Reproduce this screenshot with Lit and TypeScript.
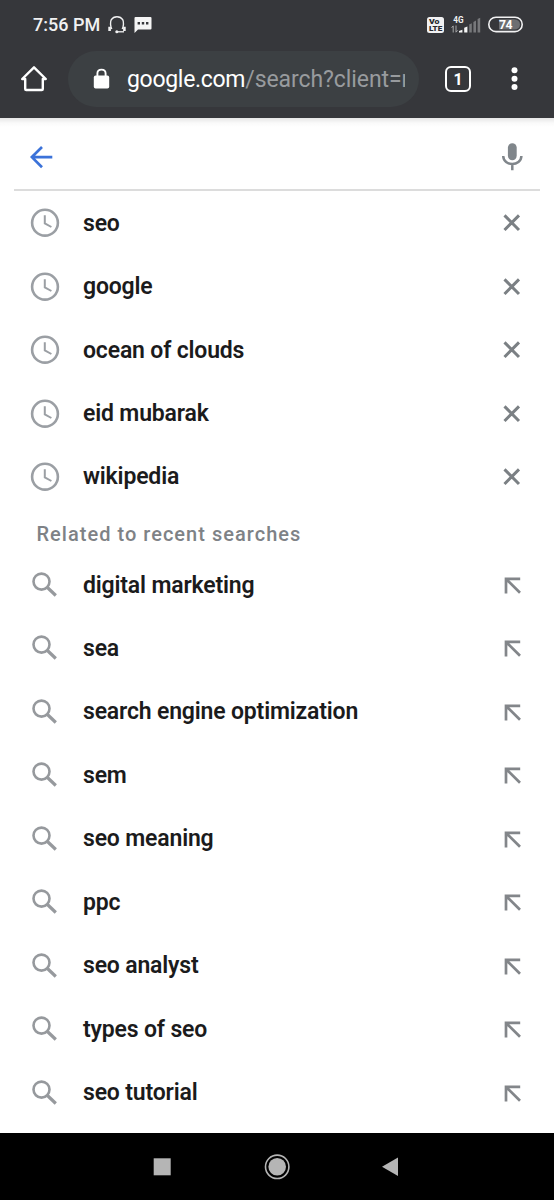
import { LitElement, html, css } from "lit";
import { customElement } from "lit/decorators.js";

const RECENT = ["seo", "google", "ocean of clouds", "eid mubarak", "wikipedia"];
const RELATED = [
  "digital marketing",
  "sea",
  "search engine optimization",
  "sem",
  "seo meaning",
  "ppc",
  "seo analyst",
  "types of seo",
  "seo tutorial",
];

const clock = html`<svg width="30" height="30" viewBox="0 0 30 30" fill="none" stroke="#9b9fa4">
  <circle cx="15" cy="14.7" r="12.9" stroke-width="2.6"></circle>
  <path d="M14.8 7.2V15.3L21.4 19" stroke-width="2"></path>
</svg>`;
const lens = html`<svg width="30" height="30" viewBox="0 0 30 30" fill="none" stroke="#96999d">
  <circle cx="11.5" cy="11.6" r="8" stroke-width="2.6"></circle>
  <path d="M17.4 17.5L25.8 25.5" stroke-width="3.2"></path>
</svg>`;
const cross = html`<svg width="20" height="20" viewBox="0 0 20 20" fill="none" stroke="#7b8084">
  <path d="M2.5 2.4L17 17M17 2.4L2.5 17" stroke-width="3"></path>
</svg>`;
const fill = html`<svg width="20" height="20" viewBox="0 0 20 20" fill="none" stroke="#83868a">
  <path d="M18.2 3.8H4V18.4M4.4 4.2L18 17.8" stroke-width="2.7"></path>
</svg>`;

@customElement("status-bar")
class StatusBar extends LitElement {
  static styles = css`
    :host {
      display: flex;
      align-items: center;
      height: 49px;
      padding: 0 31px 0 33px;
      box-sizing: border-box;
      color: #f1f1f2;
    }
    svg {
      display: block;
    }
    .time {
      font-size: 18px;
      font-weight: 500;
      width: 74px;
      white-space: nowrap;
    }
    .message {
      margin-left: 7px;
      margin-right: auto;
    }
    .signal {
      margin: 0 7px;
    }
    text {
      font-family: Roboto, sans-serif;
    }
  `;
  render() {
    return html`
      <span class="time">7:56 PM</span>
      <svg width="20" height="20" viewBox="0 0 20 20" fill="none" stroke="#f1f1f2">
        <path d="M4.8 14C3.4 11.5 3 7 4.3 4.7C6.7.7 13.3.7 15.7 4.7C17 7 16.6 11.5 15.2 14" stroke-width="1.4"></path>
        <path d="M2.6 11.8V16M17.4 11.8V16" stroke-width="2.6"></path>
        <path d="M9.6 16.8H17" stroke-width="1.3"></path>
        <circle cx="9.8" cy="16.8" r="1.5" fill="#f1f1f2" stroke="none"></circle>
      </svg>
      <svg class="message" width="18" height="18" viewBox="0 0 18 18">
        <path d="M.5 2Q.5 1 1.5 1H16.5Q17.5 1 17.5 2V12.5Q17.5 13.5 16.5 13.5H4L.5 17Z" fill="#f5f5f5"></path>
        <path d="M3.6 6.1H6V8.5H3.6ZM7.8 6.1H10.2V8.5H7.8ZM12 6.1H14.4V8.5H12Z" fill="#37383c"></path>
      </svg>
      <svg width="17" height="16" viewBox="0 0 17 16">
        <rect width="17" height="16" rx="2.5" fill="#f1f1f2"></rect>
        <text x="2" y="7.4" font-size="7.8" font-weight="900" fill="#28292d" textLength="10.5" lengthAdjust="spacingAndGlyphs">Vo</text>
        <text x="2" y="14.3" font-size="7.8" font-weight="900" fill="#28292d" textLength="13.2" lengthAdjust="spacingAndGlyphs">LTE</text>
      </svg>
      <svg class="signal" width="30" height="20" viewBox="0 0 30 20">
        <text x="2.2" y="7.6" font-size="8.2" font-weight="700" fill="#f1f1f2">4G</text>
        <path d="M2.2 11V17.5M.6 12.8L2.2 10.8M5 10.5V17M5 17.3L6.5 15.3" fill="none" stroke="#a6a7a9"></path>
        <path d="M8 16L11.4 14.7V17.5H8ZM13.2 12.7L16.4 11.4V17.5H13.2Z" fill="#f5f5f5"></path>
        <path d="M18.2 9.5L20.8 8.2V17.5H18.2ZM22.4 6.9L25 5.6V17.5H22.4ZM26.6 4L29.2 2.7V17.5H26.6Z" fill="#77787b"></path>
      </svg>
      <svg width="35" height="17" viewBox="0 0 35 17">
        <rect x=".8" y="1.2" width="33.4" height="14.4" rx="7.2" fill="none" stroke="#f1f1f2" stroke-width="1.6"></rect>
        <path d="M11 3.2H26Q31.8 3.4 32 8.4Q31.8 13.4 26 13.6H11Z" fill="#6d6e71"></path>
        <text x="17.4" y="12.7" font-size="12.2" font-weight="700" fill="#fff" text-anchor="middle" letter-spacing="-.5">74</text>
      </svg>
    `;
  }
}

@customElement("browser-bar")
class BrowserBar extends LitElement {
  static styles = css`
    :host {
      display: flex;
      align-items: center;
      height: 69px;
      box-sizing: border-box;
      padding: 0 24px 9px 19px;
      color: #fff;
    }
    svg {
      display: block;
      flex: none;
    }
    .pill {
      display: flex;
      align-items: center;
      width: 351px;
      height: 56px;
      box-sizing: border-box;
      margin-left: 19px;
      padding: 0 14px 0 25px;
      border-radius: 28px;
      background: #3c4043;
    }
    .url {
      flex: 1;
      margin-left: 17px;
      padding-top: 2px;
      overflow: hidden;
      white-space: nowrap;
      font-size: 23px;
      line-height: 32px;
      letter-spacing: -0.3px;
    }
    .path {
      color: #989b9e;
      letter-spacing: -0.08px;
    }
    .tabs {
      display: flex;
      align-items: center;
      justify-content: center;
      width: 26px;
      height: 26px;
      box-sizing: border-box;
      margin-left: 26px;
      border: 2.5px solid #fff;
      border-radius: 6px;
      font-size: 16px;
      font-weight: 700;
    }
    .more {
      margin-left: auto;
      margin-right: 12px;
    }
  `;
  render() {
    return html`
      <svg width="30" height="30" viewBox="0 0 30 30" fill="none" stroke="#fff" stroke-width="2.4" stroke-linejoin="round">
        <path d="M3.2 15L15 3.3L26.8 15H23.8V25Q23.8 26 22.8 26H7.2Q6.2 26 6.2 25V15Z"></path>
      </svg>
      <div class="pill">
        <svg width="17" height="22" viewBox="0 0 17 22">
          <rect x=".8" y="7.6" width="15.4" height="13" rx="1.8" fill="#fff"></rect>
          <path d="M4.4 8.2V5.4C4.4.4 12.6.4 12.6 5.4V8.2" fill="none" stroke="#fff" stroke-width="1.9"></path>
        </svg>
        <div class="url">google.com<span class="path">/search?client=m</span></div>
      </div>
      <div class="tabs">1</div>
      <svg class="more" width="7" height="24" viewBox="0 0 7 24" fill="#fff">
        <circle cx="3.5" cy="3.3" r="3"></circle>
        <circle cx="3.5" cy="11.7" r="3"></circle>
        <circle cx="3.5" cy="20.1" r="3"></circle>
      </svg>
    `;
  }
}

@customElement("app-root")
class AppRoot extends LitElement {
  static styles = css`
    :host {
      display: flex;
      flex-direction: column;
      width: 554px;
      height: 1200px;
      overflow: hidden;
      background: #fff;
      font-family: Roboto, sans-serif;
    }
    svg {
      display: block;
      flex: none;
    }
    .chrome {
      flex: none;
      height: 118px;
      background: #36373b;
    }
    .page {
      flex: 1;
      background: linear-gradient(#e6e6e6, #fafafa 5px, #fff 9px);
    }
    .search {
      display: flex;
      align-items: center;
      justify-content: space-between;
      height: 73px;
      box-sizing: border-box;
      margin: 0 14px 0.5px;
      padding: 7px 17px 0 15px;
      border-bottom: 2px solid #dcdcdc;
    }
    .row {
      display: flex;
      align-items: center;
      height: 63.45px;
      padding: 0 32px 0 30px;
    }
    .label {
      flex: 1;
      margin-left: 23px;
      color: #1b1b1c;
      font-size: 23px;
      font-weight: 600;
      letter-spacing: -0.17px;
      white-space: nowrap;
    }
    .heading {
      height: 44.6px;
      margin: 0;
      padding-left: 36.5px;
      color: #7e8286;
      font-size: 20px;
      line-height: 50px;
      font-weight: 500;
      letter-spacing: 1.02px;
    }
    .nav {
      flex: none;
      height: 67px;
      background: #000;
    }
  `;
  render() {
    return html`
      <div class="chrome">
        <status-bar></status-bar>
        <browser-bar></browser-bar>
      </div>
      <div class="page">
        <div class="search">
          <svg width="24" height="24" viewBox="0 0 24 24" fill="none" stroke="#3b72d9" stroke-width="2.7">
            <path d="M23.3 12.1H3.2M13 2L2.9 12.1L13 22.2"></path>
          </svg>
          <svg width="22" height="30" viewBox="0 0 22 30">
            <rect x="6.9" y="1.2" width="8.8" height="17" rx="4.4" fill="#80868b"></rect>
            <path d="M2.2 14C2.6 24.8 20 24.8 20.4 14M11.3 21.7V28.2" fill="none" stroke="#80868b" stroke-width="2.5"></path>
          </svg>
        </div>
        ${RECENT.map((t) => html`<div class="row">${clock}<span class="label">${t}</span>${cross}</div>`)}
        <h2 class="heading">Related to recent searches</h2>
        ${RELATED.map((t) => html`<div class="row">${lens}<span class="label">${t}</span>${fill}</div>`)}
      </div>
      <div class="nav">
        <svg width="554" height="67" viewBox="0 0 554 67" fill="#b5b5b5">
          <rect x="153.7" y="25.3" width="17" height="17"></rect>
          <circle cx="277.2" cy="33.8" r="8.8"></circle>
          <circle cx="277.2" cy="33.8" r="11.7" fill="none" stroke="#b5b5b5" stroke-width="1.6"></circle>
          <path d="M382 33.8L398 24.6V43Z"></path>
        </svg>
      </div>
    `;
  }
}
